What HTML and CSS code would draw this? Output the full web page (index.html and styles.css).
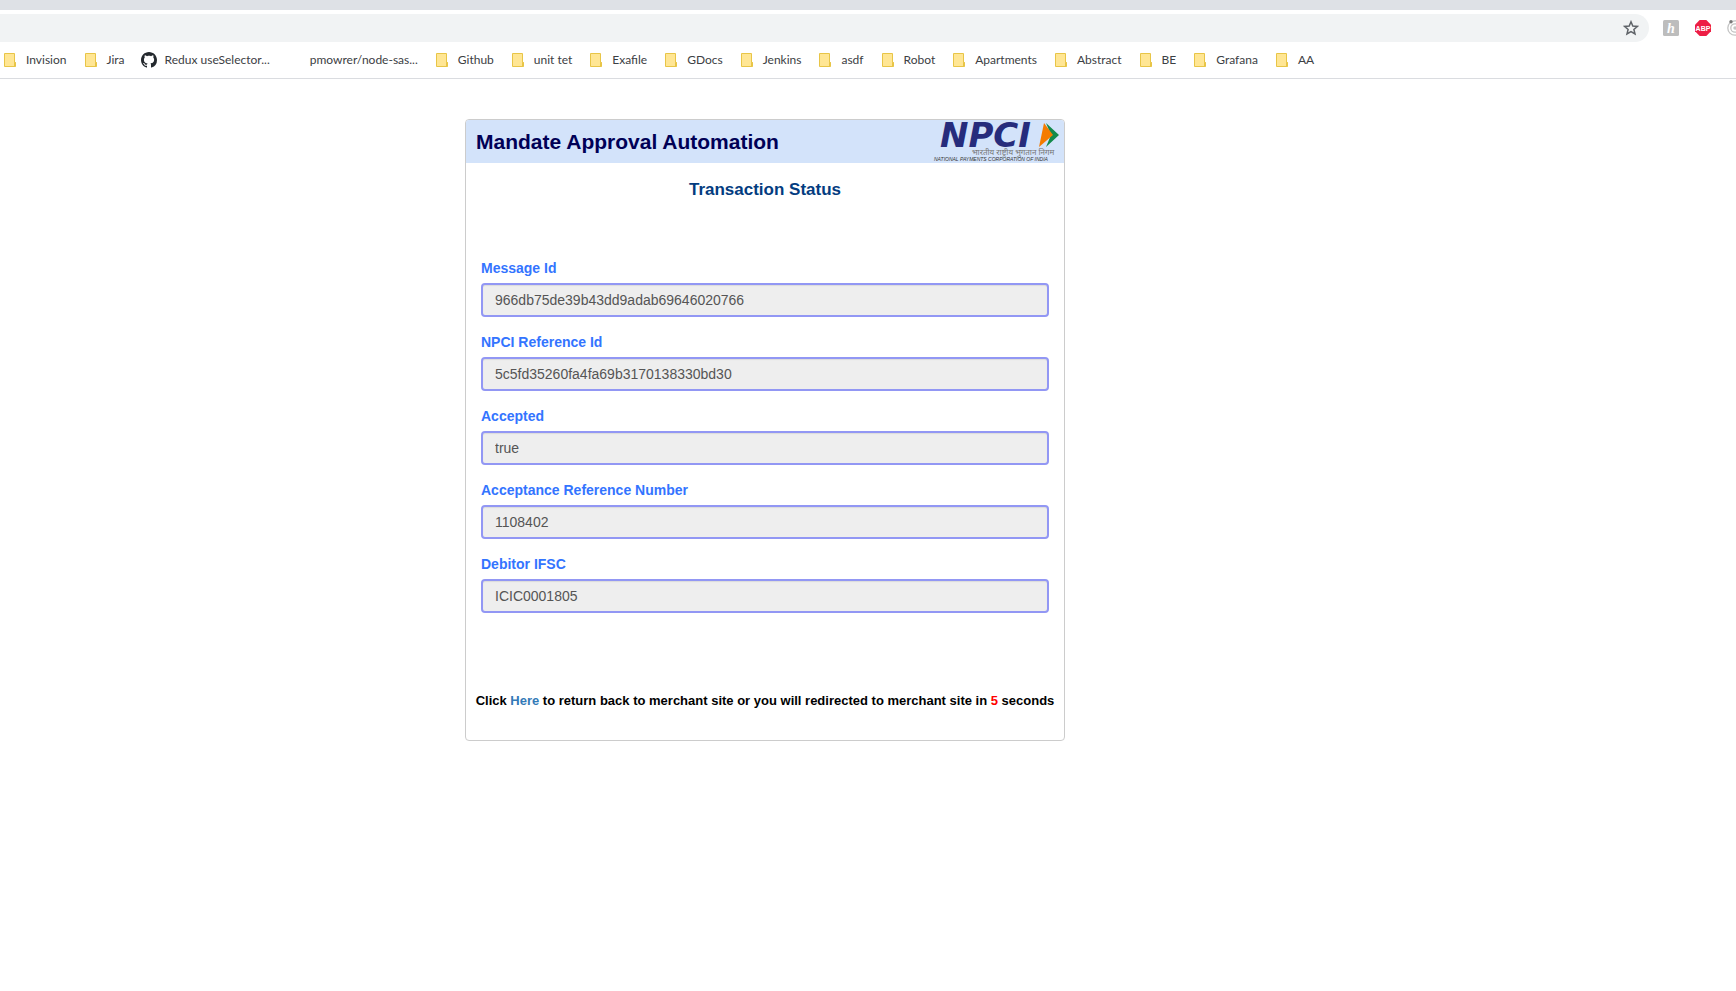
FILE: index.html
```
<!DOCTYPE html>
<html lang="en">
<head>
<meta charset="utf-8">
<title>Mandate Approval Automation</title>
<link rel="stylesheet" href="styles.css">
</head>
<body>
<svg class="symbols" aria-hidden="true">
  <symbol id="folder" viewBox="0 0 16 16">
    <path d="M2.5 1.500h10v9h1v4h-11z" fill="#ffe694" stroke="#e8c547"/>
    <path d="M12.500 14v-3.500h1v3.500z" fill="#ffe694" stroke="#e8c547"/>
  </symbol>
</svg>
<header class="browser">
  <div class="tabstrip"></div>
  <div class="toolbar">
    <div class="omnibox">
      <button class="icon-button" type="button" aria-label="Bookmark this page">
        <svg width="16" height="16" viewBox="0 0 16 16"><path d="M8 1.800l1.800 4.200 4.600.4-3.500 3 1.100 4.500-4-2.400-4 2.400 1.100-4.500-3.500-3 4.600-.4z" fill="none" stroke="#5f6368" stroke-width="1.500"/></svg>
      </button>
    </div>
    <div class="extensions">
      <button class="icon-button" type="button" aria-label="Honey">
        <svg width="16" height="16" viewBox="0 0 16 16"><rect width="16" height="16" rx="1.500" fill="#bdbdbd"/><text x="8" y="13" class="honey">h</text></svg>
      </button>
      <button class="icon-button" type="button" aria-label="Adblock Plus">
        <svg width="16" height="16" viewBox="0 0 16 16"><path d="M4.700 0h6.600L16 4.700v6.600L11.300 16H4.700L0 11.300V4.700z" fill="#ed1e45"/><text x="8" y="11" class="abp">ABP</text></svg>
      </button>
      <button class="icon-button" type="button" aria-label="Extension">
        <svg width="16" height="16" viewBox="0 0 16 16"><g fill="none" stroke="#c4c4c4" stroke-width="1.300"><circle cx="8" cy="8" r="7.200"/><circle cx="8" cy="8" r="4.200"/></g><circle cx="8" cy="8" r="1.700" fill="#c4c4c4"/><circle cx="4" cy="1.700" r="1.700" fill="#777"/></svg>
      </button>
    </div>
  </div>
  <nav class="bookmarks" aria-label="Bookmarks">
    <a href="#"><svg class="mark"><use href="#folder"/></svg>Invision</a>
    <a href="#"><svg class="mark"><use href="#folder"/></svg>Jira</a>
    <a href="#"><svg class="mark" viewBox="0 0 16 16"><path fill="#24292e" fill-rule="evenodd" d="M8 0C3.580 0 0 3.580 0 8c0 3.540 2.290 6.530 5.470 7.590.4.070.55-.17.55-.38 0-.19-.01-.82-.01-1.490-2.010.37-2.530-.49-2.690-.94-.09-.23-.48-.94-.82-1.130-.28-.15-.68-.52-.01-.53.63-.01 1.080.58 1.230.82.72 1.210 1.870.87 2.330.66.070-.52.28-.87.51-1.070-1.780-.2-3.640-.89-3.640-3.950 0-.87.31-1.590.82-2.150-.08-.2-.36-1.020.08-2.120 0 0 .67-.21 2.200.82.64-.18 1.320-.27 2-.27s1.360.09 2 .27c1.530-1.040 2.200-.82 2.200-.82.44 1.100.16 1.920.08 2.120.51.56.82 1.270.82 2.150 0 3.070-1.870 3.750-3.650 3.950.29.25.54.73.54 1.480 0 1.070-.01 1.930-.01 2.200 0 .21.15.46.55.38A8.010 8.010 0 0 0 16 8c0-4.420-3.580-8-8-8z"/></svg>Redux useSelector...</a>
    <a href="#"><span class="mark"></span>pmowrer/node-sas...</a>
    <a href="#"><svg class="mark"><use href="#folder"/></svg>Github</a>
    <a href="#"><svg class="mark"><use href="#folder"/></svg>unit tet</a>
    <a href="#"><svg class="mark"><use href="#folder"/></svg>Exafile</a>
    <a href="#"><svg class="mark"><use href="#folder"/></svg>GDocs</a>
    <a href="#"><svg class="mark"><use href="#folder"/></svg>Jenkins</a>
    <a href="#"><svg class="mark"><use href="#folder"/></svg>asdf</a>
    <a href="#"><svg class="mark"><use href="#folder"/></svg>Robot</a>
    <a href="#"><svg class="mark"><use href="#folder"/></svg>Apartments</a>
    <a href="#"><svg class="mark"><use href="#folder"/></svg>Abstract</a>
    <a href="#"><svg class="mark"><use href="#folder"/></svg>BE</a>
    <a href="#"><svg class="mark"><use href="#folder"/></svg>Grafana</a>
    <a href="#"><svg class="mark"><use href="#folder"/></svg>AA</a>
  </nav>
</header>
<main class="page">
  <section class="card">
    <header class="card-header">
      <h1>Mandate Approval Automation</h1>
      <svg class="logo" width="128" height="43" viewBox="0 0 128 43" role="img" aria-label="NPCI">
        <text x="8" y="27" class="logo-name">NPCI</text>
        <path d="M114 3l13 12-13 12 5-12z" fill="#138a4b"/>
        <path d="M112 3l9 12-14 12z" fill="#f47b00"/>
        <text x="40" y="35" class="logo-hindi">भारतीय राष्ट्रीय भुगतान निगम</text>
        <text x="2" y="41" class="logo-line">NATIONAL PAYMENTS CORPORATION OF INDIA</text>
      </svg>
    </header>
    <h2>Transaction Status</h2>
    <form class="fields">
      <div class="field"><label for="message">Message Id</label><input id="message" type="text" readonly value="966db75de39b43dd9adab69646020766"></div>
      <div class="field"><label for="npci">NPCI Reference Id</label><input id="npci" type="text" readonly value="5c5fd35260fa4fa69b3170138330bd30"></div>
      <div class="field"><label for="accepted">Accepted</label><input id="accepted" type="text" readonly value="true"></div>
      <div class="field"><label for="acceptance">Acceptance Reference Number</label><input id="acceptance" type="text" readonly value="1108402"></div>
      <div class="field"><label for="ifsc">Debitor IFSC</label><input id="ifsc" type="text" readonly value="ICIC0001805"></div>
    </form>
    <p class="redirect">Click <a href="#">Here</a> to return back to merchant site or you will redirected to merchant site in <span class="count">5</span> seconds</p>
  </section>
</main>
</body>
</html>
```
FILE: styles.css
```
* { box-sizing: border-box; }
body {
  margin: 0;
  background: #fff;
  font-family: "Liberation Sans", Arial, sans-serif;
  font-size: 14px;
  line-height: 20px;
  overflow-x: hidden;
}
.symbols { display: none; }

.tabstrip { height: 10px; background: #dee1e6; }
.toolbar { display: flex; height: 36px; padding: 4px 0; overflow: hidden; }
.omnibox {
  flex: 1;
  display: flex;
  align-items: center;
  justify-content: flex-end;
  padding-right: 10px;
  background: #f1f3f4;
  border-radius: 0 14px 14px 0;
}
.extensions {
  display: flex;
  align-items: center;
  gap: 16px;
  padding-left: 14px;
  margin-right: -7px;
}
.icon-button { display: flex; padding: 0; border: 0; background: none; }
.honey { font: italic bold 14px "Liberation Serif", serif; fill: #fff; text-anchor: middle; }
.abp { font: bold 7px "Liberation Sans", sans-serif; fill: #fff; text-anchor: middle; }
.bookmarks {
  display: flex;
  align-items: center;
  gap: 16px;
  height: 33px;
  padding: 0 2px 5px;
  border-bottom: 1px solid #dadce0;
  font-family: Lato, sans-serif;
  font-size: 12px;
  line-height: 16px;
  white-space: nowrap;
}
.bookmarks a {
  display: flex;
  align-items: center;
  gap: 8px;
  color: #3c4043;
  text-decoration: none;
}
.mark { width: 16px; height: 16px; flex: none; }

.page { max-width: 1530px; padding: 40px 16px; }
.card {
  max-width: 600px;
  margin: 0 auto;
  border: 1px solid #ccc;
  border-radius: 4px;
  padding-bottom: 29px;
}
.card-header {
  display: flex;
  align-items: center;
  justify-content: space-between;
  padding: 0 4px 0 10px;
  background: #d3e3fa;
  border-radius: 3px 3px 0 0;
}
h1 { margin: 0; font-size: 21px; line-height: 43px; color: #000056; }
h2 {
  margin: 17px 0 58px;
  font-size: 17px;
  line-height: 20px;
  text-align: center;
  color: #033c80;
}
.logo { flex: none; overflow: visible; }
.logo-name { font: italic bold 34px "DejaVu Sans", sans-serif; fill: #262c7c; }
.logo-hindi { font: italic 8px "Noto Sans", sans-serif; fill: #777; }
.logo-line { font: italic 5px "Liberation Sans", sans-serif; fill: #333; }
.fields { display: grid; gap: 15px; padding: 0 15px; }
.field { display: grid; gap: 5px; }
label { font-weight: bold; color: #3374ff; }
input {
  width: 100%;
  height: 34px;
  padding: 4px 12px;
  border: 2px solid #9297f4;
  border-radius: 4px;
  background: #eee;
  box-shadow: inset 0 1px 1px rgba(0, 0, 0, .08);
  font: inherit;
  color: #555;
}
.redirect {
  margin: 78px 0 0;
  font-size: 13px;
  font-weight: bold;
  text-align: center;
  color: #000;
}
.redirect a { color: #337ab7; text-decoration: none; }
.count { color: #f00; }
```
